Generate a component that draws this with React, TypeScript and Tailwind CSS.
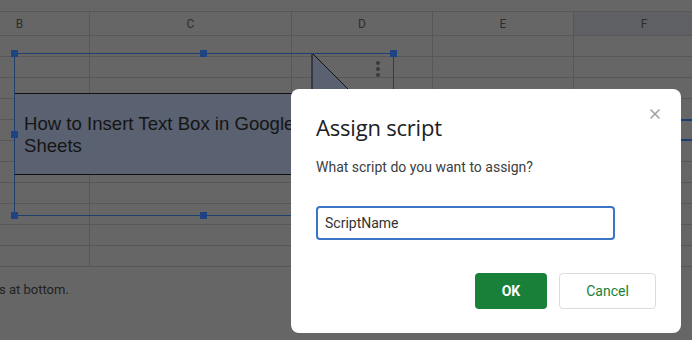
import { X } from 'lucide-react'

const cols = ['B', 'C', 'D', 'E', 'F']

function SheetGrid() {
  const rows = Array.from({ length: 11 })
  return (
    <div className="flex flex-col">
      <div className="h-[12px] border-b border-[#575757]" />
      <div className="-ml-[50px] grid grid-cols-[140px_202px_141px_141px_141px] h-[24px] border-b border-[#575757]">
        {cols.map((c) => (
          <div
            key={c}
            className={
              'flex items-center justify-center border-r border-[#575757] text-[12px] text-[#2e2e2e] ' +
              (c === 'F' ? 'bg-[#5e6064]' : '')
            }
          >
            {c}
          </div>
        ))}
      </div>
      {rows.map((_, i) => (
        <div
          key={i}
          className="-ml-[50px] grid grid-cols-[140px_202px_141px_141px_141px] h-[21px] border-b border-[#575757]"
        >
          {cols.map((c) => (
            <div key={c} className="border-r border-[#575757]" />
          ))}
        </div>
      ))}
      <div className="pt-[14px] text-[13px] leading-[18px] text-[#222] -ml-[1px]">s at bottom.</div>
    </div>
  )
}

function Handle({ x, y }: { x: number; y: number }) {
  return (
    <div
      className="absolute w-[7px] h-[7px] bg-[#1d4383]"
      style={{ left: x - 3, top: y - 3 }}
    />
  )
}

function Drawing() {
  return (
    <>
      {/* triangle shape */}
      <svg className="absolute left-0 top-0" width="692" height="340">
        <polygon points="312,53 312,140 399,140" fill="#5a6170" stroke="#111" strokeWidth="1" />
      </svg>
      {/* text box */}
      <div className="absolute left-[14px] top-[93px] w-[340px] h-[82px] bg-[#5a6170] border border-[#111] flex items-center pl-[9px]">
        <p className="font-['Liberation_Sans',Arial,sans-serif] text-[18.6px] leading-[22px] text-[#151515] pt-[1px]">
          How to Insert Text Box in Google
          <br />
          Sheets
        </p>
      </div>
      {/* selection frame */}
      <div className="absolute left-[14px] top-[53px] w-[380px] h-[163px] border border-[#1e3e70]" />
      <Handle x={14} y={53} />
      <Handle x={203} y={53} />
      <Handle x={393} y={53} />
      <Handle x={14} y={134} />
      <Handle x={14} y={215} />
      <Handle x={203} y={215} />
      {/* kebab menu */}
      <div className="absolute left-[376px] top-[61px] flex flex-col gap-[2px]">
        <span className="w-[4px] h-[4px] rounded-full bg-[#3a3a3a]" />
        <span className="w-[4px] h-[4px] rounded-full bg-[#3a3a3a]" />
        <span className="w-[4px] h-[4px] rounded-full bg-[#3a3a3a]" />
      </div>
      {/* other selection edges at right */}
      <div className="absolute left-[678px] top-[119px] w-[20px] h-[2px] bg-[#1e3e70]" />
      <div className="absolute left-[678px] top-[139px] w-[20px] h-[2px] bg-[#1e3e70]" />
    </>
  )
}

function AssignScriptDialog() {
  return (
    <div className="absolute left-[291px] top-[89px] w-[390px] h-[244px] rounded-[8px] bg-white pl-[25px] pr-[25px] pt-[24px] flex flex-col font-['Roboto',sans-serif]">
      <button className="absolute right-[18px] top-[17px] text-[#a0a0a0]">
        <X size={16} strokeWidth={2.4} />
      </button>
      <h2 className="text-[22px] leading-[28px] text-[#202124] font-['Open_Sans',sans-serif] tracking-[-0.2px]">
        Assign script
      </h2>
      <p className="mt-[16px] text-[14px] leading-[20px] text-[#3c4043]">What script do you want to assign?</p>
      <div className="mt-[29px] w-[299px] h-[34px] rounded-[4px] border-2 border-[#3a76c4] flex items-center pl-[7px] text-[14px] text-[#333]">
        ScriptName
      </div>
      <div className="mt-[33px] flex justify-end gap-[12px]">
        <button className="w-[72px] h-[36px] rounded-[4px] bg-[#188038] text-white text-[14px] font-bold">OK</button>
        <button className="w-[97px] h-[36px] rounded-[4px] border border-[#dadce0] bg-white text-[#188038] text-[14px]">
          Cancel
        </button>
      </div>
    </div>
  )
}

export default function App() {
  return (
    <div className="relative w-[692px] h-[340px] overflow-hidden bg-[#666666] font-['Roboto',sans-serif]">
      <SheetGrid />
      <Drawing />
      <AssignScriptDialog />
    </div>
  )
}
